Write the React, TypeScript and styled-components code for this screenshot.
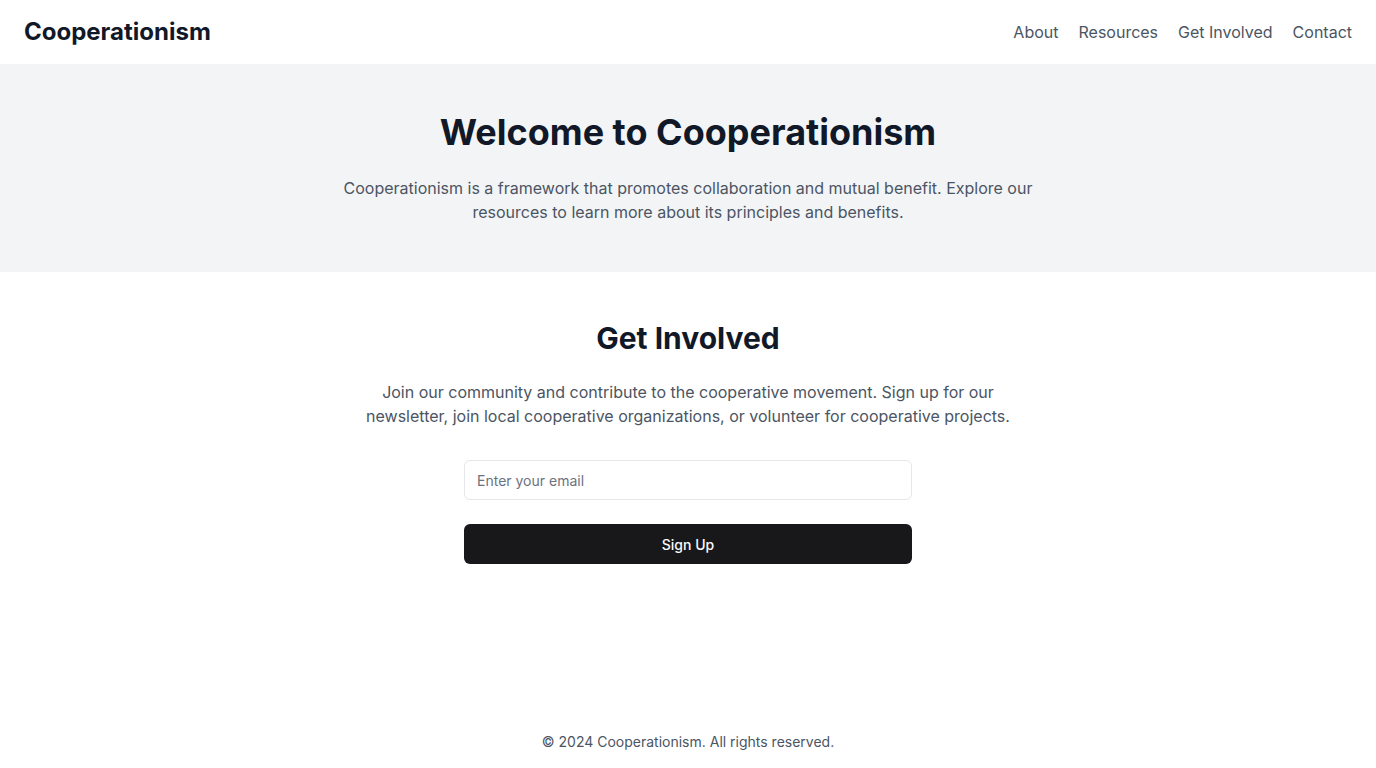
import React from "react";
import styled, { createGlobalStyle } from "styled-components";

const GlobalStyle = createGlobalStyle`
  * {
    box-sizing: border-box;
  }
  body {
    margin: 0;
    font-family: Inter, "Noto Sans", "Liberation Sans", sans-serif;
    background: #ffffff;
    color: #111827;
  }
`;

const Page = styled.div`
  min-height: 100vh;
  display: flex;
  flex-direction: column;
`;

const Header = styled.header`
  height: 64px;
  padding: 0 24px;
  display: flex;
  align-items: center;
  justify-content: space-between;
`;

const Brand = styled.a`
  font-size: 24px;
  line-height: 32px;
  font-weight: 700;
  color: #111827;
  text-decoration: none;
`;

const Nav = styled.nav`
  display: flex;
  gap: 20px;
`;

const NavLink = styled.a`
  font-size: 16px;
  line-height: 24px;
  color: #4b5563;
  text-decoration: none;
`;

const Main = styled.main`
  flex: 1;
`;

const Section = styled.section<{ $muted?: boolean }>`
  padding: 48px 24px;
  background: ${(p) => (p.$muted ? "#f3f4f6" : "#ffffff")};
  display: flex;
  flex-direction: column;
  align-items: center;
  text-align: center;
`;

const Title = styled.h1<{ $size: number }>`
  margin: 0 0 24px;
  font-size: ${(p) => p.$size}px;
  line-height: ${(p) => p.$size + (p.$size > 32 ? 4 : 6)}px;
  font-weight: 700;
  color: #111827;
`;

const Lead = styled.p<{ $width: number }>`
  margin: 0;
  max-width: ${(p) => p.$width}px;
  font-size: 16px;
  line-height: 24px;
  color: #4b5563;
`;

const Form = styled.form`
  width: 100%;
  max-width: 448px;
  margin-top: 32px;
  display: flex;
  flex-direction: column;
  gap: 24px;
`;

const Input = styled.input`
  height: 40px;
  width: 100%;
  padding: 0 12px;
  border: 1px solid #e5e7eb;
  border-radius: 6px;
  font-family: inherit;
  font-size: 14px;
  color: #111827;
  background: #ffffff;
  outline: none;

  &::placeholder {
    color: #6b7280;
  }
`;

const Button = styled.button`
  height: 40px;
  width: 100%;
  border: none;
  border-radius: 6px;
  background: #18181b;
  color: #fafafa;
  font-family: inherit;
  font-size: 14px;
  font-weight: 500;
  cursor: pointer;
`;

const Footer = styled.footer`
  padding: 16px 24px;
  text-align: center;
  font-size: 14px;
  line-height: 20px;
  color: #4b5563;
`;

const links = ["About", "Resources", "Get Involved", "Contact"];

const App = () => {
  return (
    <Page>
      <GlobalStyle />
      <Header>
        <Brand href="#">Cooperationism</Brand>
        <Nav>
          {links.map((l) => (
            <NavLink key={l} href="#">
              {l}
            </NavLink>
          ))}
        </Nav>
      </Header>
      <Main>
        <Section $muted>
          <Title $size={36}>Welcome to Cooperationism</Title>
          <Lead $width={700}>
            Cooperationism is a framework that promotes collaboration and
            mutual benefit. Explore our resources to learn more about its
            principles and benefits.
          </Lead>
        </Section>
        <Section>
          <Title as="h2" $size={30}>
            Get Involved
          </Title>
          <Lead $width={672}>
            Join our community and contribute to the cooperative movement. Sign
            up for our newsletter, join local cooperative organizations, or
            volunteer for cooperative projects.
          </Lead>
          <Form onSubmit={(e) => e.preventDefault()}>
            <Input type="email" placeholder="Enter your email" />
            <Button type="submit">Sign Up</Button>
          </Form>
        </Section>
      </Main>
      <Footer>© 2024 Cooperationism. All rights reserved.</Footer>
    </Page>
  );
};

export default App;
